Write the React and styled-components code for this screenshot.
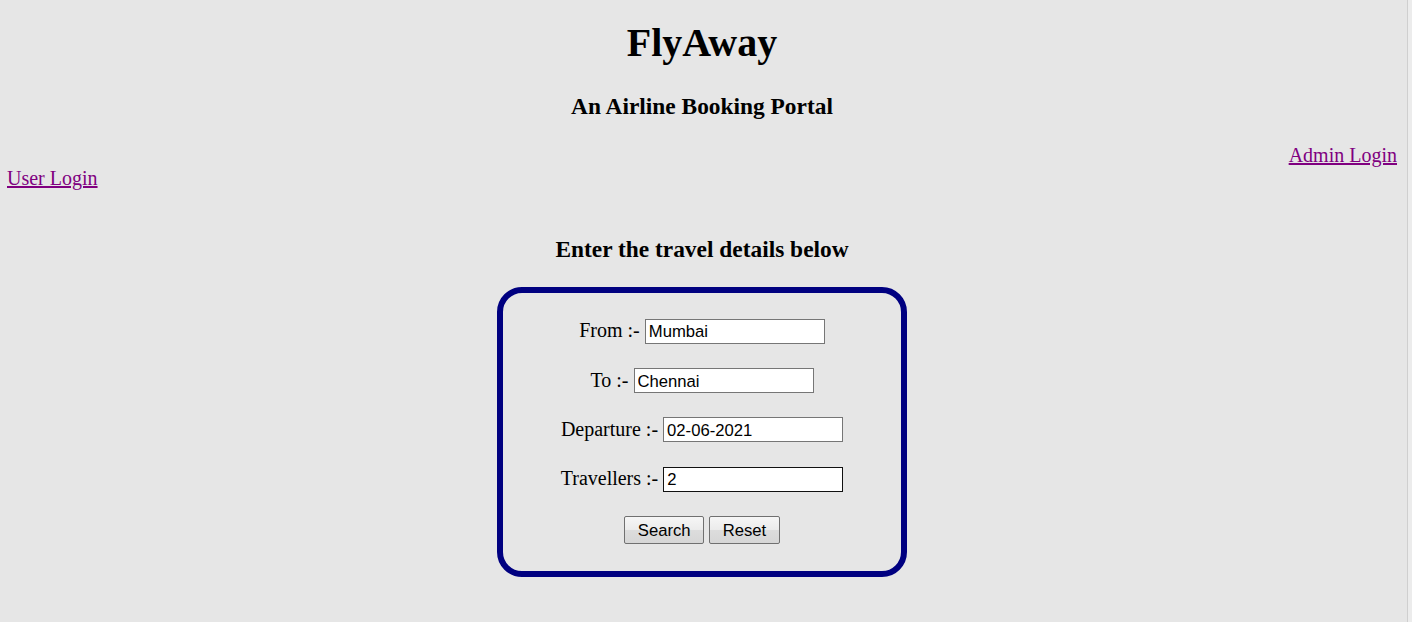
import React from "react";
import styled, { createGlobalStyle } from "styled-components";

const Global = createGlobalStyle`
  html, body {
    margin: 0;
    padding: 0;
    background: #e6e6e6;
    overflow: hidden;
  }
  body {
    font-family: "Liberation Serif", "Times New Roman", serif;
    color: #000;
  }
`;

const Frame = styled.div`
  display: flex;
  width: 1412px;
  height: 622px;
  background: #e6e6e6;
`;

const Main = styled.main`
  flex: 1;
  display: flex;
  flex-direction: column;
  padding: 0 10px 0 7px;
  min-width: 0;
`;

const ScrollEdge = styled.div`
  width: 4px;
  flex: none;
  background: #ececec;
  border-left: 1px solid #cfcfcf;
`;

const Title = styled.h1`
  margin: 19.5px 0 0;
  font-size: 40px;
  line-height: 46px;
  font-weight: bold;
  text-align: center;
`;

const Heading = styled.h3`
  margin: ${(p) => p.$top}px 0 0;
  font-size: 23.4px;
  line-height: 27px;
  font-weight: bold;
  text-align: center;
`;

const LinkLine = styled.div`
  margin-top: ${(p) => p.$top || 0}px;
  font-size: 20px;
  line-height: 23px;
  text-align: ${(p) => p.$align || "left"};
`;

const Link = styled.a`
  color: #800080;
  text-decoration: underline;
`;

const Card = styled.form`
  align-self: center;
  margin-top: 24px;
  width: 410px;
  box-sizing: border-box;
  border: 6px solid #000080;
  border-radius: 25px;
  padding: 25.3px 0 26.7px;
  display: flex;
  flex-direction: column;
  align-items: center;
  gap: 24.3px;
`;

const Row = styled.label`
  display: flex;
  align-items: baseline;
  justify-content: center;
  gap: 5px;
  height: 25px;
  font-size: 20px;
  line-height: 23px;
`;

const Input = styled.input`
  box-sizing: border-box;
  width: 180px;
  height: 25px;
  margin: 0;
  padding: 2px 3px 0;
  border: 1px solid ${(p) => (p.$focused ? "#111" : "#767676")};
  background: #fff;
  font-family: "Liberation Sans", Arial, sans-serif;
  font-size: 16.67px;
  color: #000;
  outline: none;
`;

const Buttons = styled.div`
  display: flex;
  gap: 5px;
  height: 28px;
`;

const Button = styled.button`
  box-sizing: border-box;
  height: 28px;
  margin: 0;
  padding: 2px 12.5px 0;
  border: 1px solid #707070;
  border-radius: 2px;
  background: linear-gradient(to bottom, #f6f6f6 0%, #ebebeb 50%, #dddddd 51%, #d6d6d6 100%);
  font-family: "Liberation Sans", Arial, sans-serif;
  font-size: 16.67px;
  color: #000;
  cursor: default;
`;

const fields = [
  { label: "From :-", value: "Mumbai" },
  { label: "To :-", value: "Chennai" },
  { label: "Departure :-", value: "02-06-2021" },
  { label: "Travellers :-", value: "2", focused: true },
];

export default function App() {
  return (
    <>
      <Global />
      <Frame>
        <Main>
          <Title>FlyAway</Title>
          <Heading $top={27.3}>An Airline Booking Portal</Heading>
          <LinkLine $top={24.7} $align="right">
            <Link href="#">Admin Login</Link>
          </LinkLine>
          <LinkLine>
            <Link href="#">User Login</Link>
          </LinkLine>
          <Heading $top={46}>Enter the travel details below</Heading>
          <Card onSubmit={(e) => e.preventDefault()}>
            {fields.map((f) => (
              <Row key={f.label}>
                <span>{f.label}</span>
                <Input defaultValue={f.value} $focused={f.focused} />
              </Row>
            ))}
            <Buttons>
              <Button type="submit">Search</Button>
              <Button type="reset">Reset</Button>
            </Buttons>
          </Card>
        </Main>
        <ScrollEdge />
      </Frame>
    </>
  );
}
